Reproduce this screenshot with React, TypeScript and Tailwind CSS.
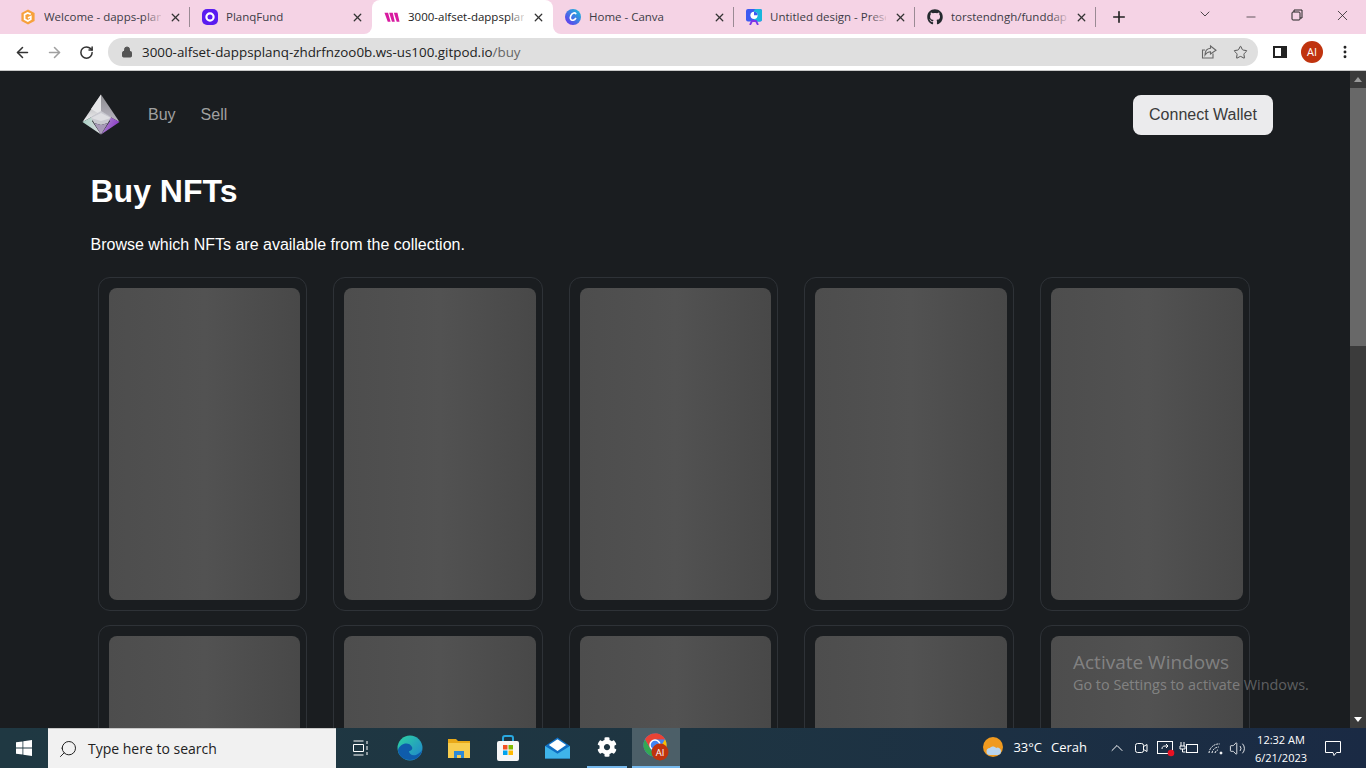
import React from "react";
import { ArrowLeft, ArrowRight, RotateCw, Lock, Star, X, Plus, ChevronDown, Minus, MoreVertical, Search, ChevronUp, Volume2 } from "lucide-react";
import { FaGithub, FaCog } from "react-icons/fa";

const segoe = "font-['Open_Sans',sans-serif]";

const Gitpod = () => (
  <svg width="16" height="16" viewBox="0 0 16 16">
    <path d="M8 .5 14.600 4v8L8 15.500 1.400 12V4z" fill="#f7a13c" />
    <path d="M10.800 5.200 7.600 3.900 4.600 5.600v4.600l3.200 1.800 3-1.700V7.600L8 9" fill="none" stroke="#fff" strokeWidth="1.700" />
  </svg>
);
const Planq = () => (
  <svg width="16" height="16" viewBox="0 0 16 16">
    <rect width="16" height="16" rx="5" fill="#5a1cf0" />
    <circle cx="8" cy="8" r="3.600" fill="none" stroke="#fff" strokeWidth="2.200" />
  </svg>
);
const Walletconnect = () => (
  <svg width="16" height="16" viewBox="0 0 17 16">
    <path d="M.5 3.500h3.800L7 13H4zM5.500 3.500h3.800L11.500 13H8.500zM10.500 3.500h3.800L16.500 13H13.500z" fill="#d81aa0" />
  </svg>
);
const Canva = () => (
  <svg width="16" height="16" viewBox="0 0 16 16">
    <defs>
      <linearGradient id="canva" x1="0" y1="1" x2="1" y2="0">
        <stop offset="0" stopColor="#6a2cf0" />
        <stop offset="1" stopColor="#19c4d8" />
      </linearGradient>
    </defs>
    <circle cx="8" cy="8" r="8" fill="url(#canva)" />
    <path d="M11 5.200C10.400 3 7.200 3.600 5.800 6.600c-1.200 2.800 0 5.200 2.400 4.600 1.200-.3 2.200-1.200 2.800-2.200" fill="none" stroke="#fff" strokeWidth="1.600" />
  </svg>
);
const Slides = () => (
  <svg width="16" height="16" viewBox="0 0 16 16">
    <rect x="0" y="0" width="16" height="12.500" rx="2" fill="#3d5af1" />
    <rect x="8" y="0" width="8" height="12.500" rx="2" fill="#18b6dc" />
    <path d="M4 16 6 12h4l2 4" fill="none" stroke="#7a35e8" strokeWidth="1.800" />
    <circle cx="8" cy="6.300" r="3.600" fill="#fff" />
    <path d="M8 6.300V2.700a3.600 3.600 0 0 1 3.600 3.600z" fill="#3d5af1" />
  </svg>
);

type TabProps = { icon: React.ReactNode; title: string; active?: boolean; width: string; fade?: boolean; sep?: boolean };

const Tab = ({ icon, title, active, width, fade, sep }: TabProps) => (
  <div className={`relative flex h-[34px] shrink-0 items-center pl-3 pr-2 ${width} ${active ? "rounded-t-lg bg-white" : ""}`}>
    {active && (
      <>
        <div className="absolute bottom-0 -left-2 h-2 w-2 bg-white">
          <div className="h-full w-full rounded-br-lg bg-[#f5d3e5]" />
        </div>
        <div className="absolute -right-2 bottom-0 h-2 w-2 bg-white">
          <div className="h-full w-full rounded-bl-lg bg-[#f5d3e5]" />
        </div>
      </>
    )}
    {icon}
    <div className={`ml-2 flex-1 overflow-hidden whitespace-nowrap text-[11.5px] ${active ? "text-[#222]" : "text-[#3c3c46]"} ${segoe}`}>{title}</div>
    {fade && <div className={`absolute right-[26px] h-5 w-5 bg-gradient-to-r from-transparent ${active ? "to-white" : "to-[#f5d3e5]"}`} />}
    <X size={13} strokeWidth={2.400} className="ml-2 shrink-0 text-[#333]" />
    {sep && <div className="absolute right-0 h-5 w-px bg-[#9a8a94]" />}
  </div>
);

const Logo = () => (
  <svg width="38" height="41" viewBox="0 0 38 41" className="-translate-y-px">
    <defs>
      <linearGradient id="lg1" x1="0" y1="0" x2="0" y2="1">
        <stop offset="0" stopColor="#9a9a9e" />
        <stop offset="1" stopColor="#f2f2f4" />
      </linearGradient>
      <linearGradient id="lg2" x1="0" y1="0" x2="0" y2="1">
        <stop offset="0" stopColor="#8c8c90" />
        <stop offset="1" stopColor="#b9b6c2" />
      </linearGradient>
      <linearGradient id="lg3" x1="0" y1="0" x2="1" y2="0">
        <stop offset="0" stopColor="#a8d0c4" />
        <stop offset="1" stopColor="#dcdce0" />
      </linearGradient>
      <linearGradient id="lg4" x1="0" y1="0" x2="1" y2="0.600">
        <stop offset="0" stopColor="#b8a8cc" />
        <stop offset="1" stopColor="#8a35c8" />
      </linearGradient>
    </defs>
    <path d="M19 .5 .5 28 19 18 z" fill="url(#lg1)" />
    <path d="M19 .5 37.500 28 19 18z" fill="url(#lg2)" />
    <path d="M19 .5 9 15 19 21z" fill="#e6e6e8" />
    <path d="M.5 28 19 18 10 27 19 40.500z" fill="url(#lg3)" />
    <path d="M37.500 28 19 18 28 27 19 40.500z" fill="url(#lg4)" />
    <path d="M19 17 29 23 26 29 19 31 12 29 9 23z" fill="#c9c9d0" />
    <path d="M9 24 19 19 29 24 19 27z" fill="#dedee2" />
    <path d="M12 29 19 31 26 29 19 40.500z" fill="#a89ab8" />
  </svg>
);

const NftCard = () => (
  <div className="h-[334px] rounded-xl border border-[#2e3237] py-[10px] pr-[6px] pl-[10px]">
    <div className="h-[312px] rounded-lg bg-gradient-to-r from-[#4d4d4d] via-[#525252] to-[#484848]" />
  </div>
);

const TrayIcons = () => (
  <svg width="96" height="20" viewBox="0 0 96 20" fill="none" stroke="#fff" strokeWidth="1">
    {/* camera */}
    <rect x="1.500" y="5.500" width="8" height="9" rx="2" />
    <path d="M9.500 8.500 13 6.500v7l-3.500-2" />
    {/* screen with red dot */}
    <rect x="23.500" y="3.500" width="15" height="12" />
    <path d="M28 11c0-2 1-3 3-3h3M32 6l2 2-2 2" />
    <circle cx="37" cy="15" r="3.300" fill="#e81123" stroke="none" />
    {/* battery plug */}
    <path d="M47 4v4M50 4v4M46 8h5v3h-5zM48.500 11v3h3" />
    <rect x="52.500" y="6.500" width="11" height="8" />
    {/* wifi */}
    <path d="M75 15a10 10 0 0 1 11-9M78 15a7 7 0 0 1 7-6M81 15a4 4 0 0 1 3-3" strokeDasharray="2 1" />
    <circle cx="87" cy="15" r="1" fill="#fff" />
  </svg>
);

export default function App() {
  return (
    <div className="flex h-screen w-full flex-col overflow-hidden bg-[#1a1d20]">
      {/* tab strip */}
      <div className="flex h-[34px] shrink-0 items-center bg-[#f5d3e5] pl-2">
        <Tab icon={<Gitpod />} title="Welcome - dapps-planq" width="w-[182px]" fade sep />
        <Tab icon={<Planq />} title="PlanqFund" width="w-[182px]" />
        <Tab icon={<Walletconnect />} title="3000-alfset-dappsplanq" width="w-[181px]" active fade />
        <Tab icon={<Canva />} title="Home - Canva" width="w-[181px]" sep />
        <Tab icon={<Slides />} title="Untitled design - Presentation" width="w-[181px]" fade sep />
        <Tab icon={<FaGithub size={16} className="text-[#24292e]" />} title="torstendngh/funddapp" width="w-[181px]" fade sep />
        <Plus size={18} strokeWidth={2.200} className="ml-[14px] text-[#222]" />
        <div className="ml-auto flex items-center text-[#222]">
          <ChevronDown size={16} strokeWidth={1.200} className="mr-[31px] -translate-y-[3px]" />
          <Minus size={14} strokeWidth={1.200} className="mr-[33px]" />
          <svg width="12" height="12" viewBox="0 0 12 12" fill="none" stroke="#222" className="mr-[31px] -translate-y-[2px]">
            <rect x="1" y="3" width="8" height="8" rx="1" />
            <path d="M3 3V1h8v8H9" />
          </svg>
          <X size={17} strokeWidth={1.100} className="mr-[15px] -translate-y-[2px]" />
        </div>
      </div>

      {/* address bar */}
      <div className="flex h-[37px] shrink-0 items-center border-b border-[#c8c8c8] bg-white pl-[14px]">
        <ArrowLeft size={17} strokeWidth={2.200} className="text-[#333]" />
        <ArrowRight size={17} strokeWidth={2.200} className="ml-[15px] text-[#a0a0a0]" />
        <RotateCw size={15} strokeWidth={2.400} className="ml-[16px] text-[#333]" />
        <div className="ml-[14px] flex h-[28px] w-[1150px] items-center rounded-full bg-[#dfdfdf] pl-[13px] pr-[10px]">
          <Lock size={12} fill="#555" strokeWidth={2} className="text-[#555]" />
          <div className={`ml-[9px] text-[13.390px] text-[#222] ${segoe}`}>
            3000-alfset-dappsplanq-zhdrfnzoo0b.ws-us100.gitpod.io<span className="text-[#666]">/buy</span>
          </div>
          <svg width="16" height="16" viewBox="0 0 16 16" fill="none" stroke="#666" strokeWidth="1.100" className="ml-auto mr-[16px]">
            <path d="M12 9.500V14H1.500V6H4" />
            <path d="M9.500 2 15 6.300 9.500 10V7.700C7 7.700 5.500 8.500 4 11c0-4 2-6.500 5.500-6.800z" />
          </svg>
          <Star size={15} strokeWidth={1.600} className="text-[#555]" />
        </div>
        <div className="ml-[15px] h-[12px] w-[14px] border-2 border-r-[6px] border-[#222]" />
        <div className={`ml-[14px] flex h-[22px] w-[22px] items-center justify-center rounded-full bg-[#c0330e] text-[11px] text-white ${segoe}`}>AI</div>
        <MoreVertical size={16} strokeWidth={2.400} className="ml-[14px] text-[#222]" />
      </div>

      {/* page + scrollbar */}
      <div className="relative flex min-h-0 flex-1">
        <div className="min-w-0 flex-1 overflow-hidden font-['Liberation_Sans',sans-serif]">
          <nav className="flex h-[88px] items-center justify-between pl-[82px] pr-[77px]">
            <div className="flex items-center">
              <Logo />
              <a className="ml-[28px] text-base text-[#a0a0a0]">Buy</a>
              <a className="ml-[25px] text-base text-[#a0a0a0]">Sell</a>
            </div>
            <button className="h-10 w-[140px] rounded-lg bg-[#ebebed] text-base text-[#3a3a3a]">Connect Wallet</button>
          </nav>
          <div className="pl-[90.500px]">
            <h1 className="mt-[12px] text-[32px] leading-10 font-bold text-white">Buy NFTs</h1>
            <p className="mt-[22px] text-base leading-6 text-white">Browse which NFTs are available from the collection.</p>
          </div>
          <div className="mt-[20px] ml-[97.600px] grid w-[1152px] grid-cols-5 gap-x-[26px] gap-y-[14px]">
            {Array.from({ length: 10 }).map((_, i) => (
              <NftCard key={i} />
            ))}
          </div>
        </div>
        <div className="flex w-4 shrink-0 flex-col items-center bg-[#3b3b3b]">
          <div className="mt-[6px] mb-[6px] h-0 w-0 border-x-[4px] border-b-[5px] border-x-transparent border-b-[#9a9a9a]" />
          <div className="h-[258px] w-full bg-[#686868]" />
          <div className="mt-auto mb-[6px] h-0 w-0 border-x-[4px] border-t-[5px] border-x-transparent border-t-white" />
        </div>
        {/* activation watermark */}
        <div className={`pointer-events-none absolute top-[579px] left-[1073px] whitespace-nowrap text-white/30 ${segoe}`}>
          <div className="text-[19px] leading-6">Activate Windows</div>
          <div className="mt-px text-[14.400px] leading-5">Go to Settings to activate Windows.</div>
        </div>
      </div>

      {/* taskbar */}
      <div className={`flex h-10 shrink-0 items-center bg-gradient-to-r from-[#1f3842] via-[#1e3542] to-[#1a2a44] text-white ${segoe}`}>
        <svg width="16" height="16" viewBox="0 0 16 16" fill="#fff" className="ml-4">
          <path d="M0 2.300 6.500 1.400V7.600H0zM7.300 1.300 16 0V7.600H7.300zM0 8.400H6.500V14.600L0 13.700zM7.300 8.400H16V16L7.300 14.700z" />
        </svg>
        <div className="ml-4 flex h-10 w-[288px] items-center border-t border-[#c8c8c8] bg-[#f1f1f1] pl-[10px] text-[#222]">
          <Search size={20} strokeWidth={1.200} className="-scale-x-100" />
          <span className="ml-[10px] text-[14px]">Type here to search</span>
        </div>
        <div className="flex h-10 w-[49px] items-center justify-center">
          <svg width="18" height="16" viewBox="0 0 18 16" fill="none" stroke="#fff">
            <path d="M1.500 1h10M1.500 4.500h10v7h-10zM1.500 15h10M15 1v3M15 6v4M15 12v3" />
          </svg>
        </div>
        {/* edge */}
        <div className="flex h-10 w-[49px] items-center justify-center">
          <svg width="26" height="26" viewBox="0 0 26 26">
            <defs>
              <linearGradient id="edge" x1="0" y1="0" x2="1" y2="1">
                <stop offset="0" stopColor="#2dd4a0" />
                <stop offset="1" stopColor="#1f7fd0" />
              </linearGradient>
            </defs>
            <circle cx="13" cy="13" r="12.500" fill="url(#edge)" />
            <path d="M1 15C3 8 12 6 15 12c1 2-1 4-3 4 0 3 3 5 7 4 2-1 4-2 6-5-1 7-7 10-12 10C6 25 1 20 1 15z" fill="#0f5cab" />
          </svg>
        </div>
        {/* explorer */}
        <div className="flex h-10 w-[49px] items-center justify-center">
          <svg width="24" height="22" viewBox="0 0 24 22">
            <path d="M1 2h8l2 2h12v16H1z" fill="#e8a918" />
            <rect x="1" y="6" width="22" height="15" fill="#f7cd4f" />
            <path d="M7 21v-7h10v7h-3v-3h-4v3z" fill="#2d8ad6" />
          </svg>
        </div>
        {/* store */}
        <div className="flex h-10 w-[50px] items-center justify-center">
          <svg width="24" height="26" viewBox="0 0 24 26">
            <path d="M7 7V3a2 2 0 0 1 2-2h6a2 2 0 0 1 2 2v4" fill="none" stroke="#29a8df" strokeWidth="2" />
            <rect x="1" y="6" width="22" height="20" rx="2" fill="#f6f6f6" />
            <rect x="7" y="10" width="4.500" height="4.500" fill="#f25022" />
            <rect x="12.500" y="10" width="4.500" height="4.500" fill="#7fba00" />
            <rect x="7" y="15.500" width="4.500" height="4.500" fill="#00a4ef" />
            <rect x="12.500" y="15.500" width="4.500" height="4.500" fill="#ffb900" />
          </svg>
        </div>
        {/* mail */}
        <div className="flex h-10 w-[49px] items-center justify-center">
          <svg width="25" height="22" viewBox="0 0 26 22">
            <path d="M13 0 26 9v13H0V9z" fill="#0f70c4" />
            <path d="M0 9 13 17 26 9v13H0z" fill="#3fb4ea" />
            <path d="M4 8 13 2 22 8 13 14z" fill="#fff" />
          </svg>
        </div>
        {/* settings */}
        <div className="flex h-10 w-[49px] items-center justify-center">
          <div className="flex h-10 w-10 items-center justify-center border-b-2 border-[#76b9ed]">
            <FaCog size={20} />
          </div>
        </div>
        {/* chrome */}
        <div className="ml-[1px] flex h-10 w-[48px] items-center justify-center border-b-2 border-[#76b9ed] bg-[#4c5f68]">
          <svg width="26" height="28" viewBox="0 0 26 28">
            <circle cx="12" cy="12" r="11.500" fill="#4285f4" />
            <path d="M12 .5a11.500 11.500 0 0 1 10 5.750H12z" fill="#ea4335" />
            <path d="M2 6.250 7 15l5 8.500A11.500 11.500 0 0 1 2 6.250z" fill="#34a853" />
            <path d="M22 6.250A11.500 11.500 0 0 1 12 23.500l5-8.500z" fill="#fbbc05" />
            <path d="M12 .5A11.500 11.500 0 0 0 2 6.250L7 15l5-8.750h10A11.500 11.500 0 0 0 12 .5z" fill="#ea4335" />
            <circle cx="12" cy="12" r="5" fill="#4285f4" stroke="#fff" strokeWidth="1.500" />
            <circle cx="17" cy="19" r="8.500" fill="#c0330e" />
            <text x="17" y="22.500" fontSize="9.500" fill="#fff" textAnchor="middle">AI</text>
          </svg>
        </div>

        <div className="ml-auto flex items-center">
          <svg width="22" height="22" viewBox="0 0 22 22">
            <circle cx="10" cy="10" r="10" fill="#f09a1f" />
            <path d="M7 18a3.500 3.500 0 0 1 0-7c1-2 5-2 6 0a3.500 3.500 0 0 1 5 3.500 3.500 3.500 0 0 1-3 3.500z" fill="#b8d4ee" />
          </svg>
          <span className="ml-[8px] text-[13px]">33°C</span>
          <span className="ml-[9px] text-[13px]">Cerah</span>
          <ChevronUp size={20} strokeWidth={1.200} className="ml-[20px]" />
          <div className="ml-[7px] flex items-center">
            <TrayIcons />
          </div>
          <Volume2 size={17} strokeWidth={1.200} className="-ml-[1px]" />
          <div className="ml-[4px] flex w-[62px] translate-y-px flex-col items-center text-[11px] leading-[18px]">
            <span>12:32 AM</span>
            <span>6/21/2023</span>
          </div>
          <svg width="16" height="15" viewBox="0 0 16 15" fill="none" stroke="#fff" className="mr-[25px] ml-[13px]">
            <path d="M.5.500h15v11h-4l-2.500 3-1-3H.5z" />
          </svg>
        </div>
      </div>
    </div>
  );
}
